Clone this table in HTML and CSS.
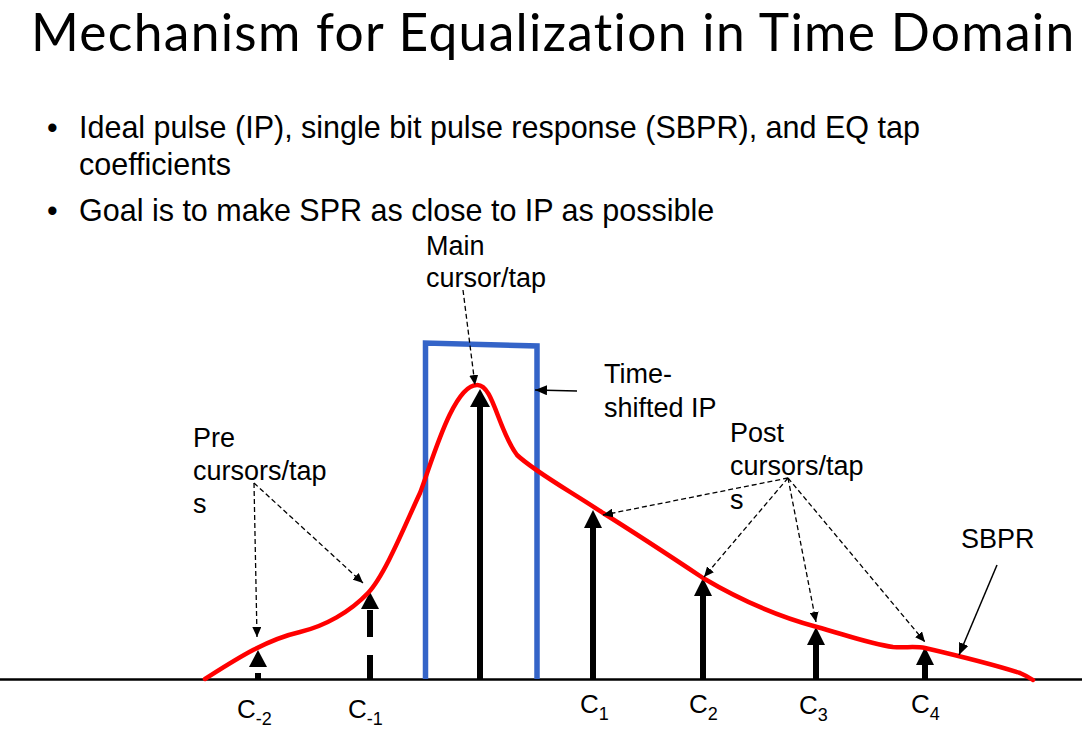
FILE: index.html
```html
<!DOCTYPE html>
<html lang="en">
<head>
<meta charset="utf-8">
<title>Mechanism for Equalization in Time Domain</title>
<link rel="stylesheet" href="styles.css">
</head>
<body>
<div class="slide">
  <header class="head">
    <h1 class="title">Mechanism for Equalization in Time Domain</h1>
    <ul class="points">
      <li class="point"><span class="dot">•</span><span class="txt">Ideal pulse (IP), single bit pulse response (SBPR), and EQ tap coefficients</span></li>
      <li class="point"><span class="dot">•</span><span class="txt">Goal is to make SPR as close to IP as possible</span></li>
    </ul>
  </header>
  <svg class="diagram" viewBox="0 228 1092 502" width="1092" height="502" xmlns="http://www.w3.org/2000/svg">
    <defs>
      <marker id="hd" markerUnits="userSpaceOnUse" markerWidth="10" markerHeight="9" refX="10" refY="4.5" orient="auto">
        <path class="head-fill" d="M0,0 L10,4.5 L0,9 Z"/>
      </marker>
      <marker id="hs" markerUnits="userSpaceOnUse" markerWidth="12" markerHeight="10" refX="12" refY="5" orient="auto">
        <path class="head-fill" d="M0,0 L12,5 L0,10 Z"/>
      </marker>
    </defs>

    <!-- axis -->
    <line class="axis" x1="0" y1="679.5" x2="1082" y2="679.5"/>

    <!-- ideal pulse -->
    <path class="ip" d="M425.5,679 L425.5,343 L537,346 L537,679"/>

    <!-- tap arrows -->
    <g class="taps">
      <rect x="255" y="673" width="6" height="7"/>
      <path d="M249,667 L258,650 L267,667 Z"/>

      <rect x="367" y="655" width="6" height="25"/>
      <rect x="367" y="610" width="6" height="27"/>
      <path d="M361,609 L370,592 L379,609 Z"/>

      <rect x="477" y="405" width="6" height="275"/>
      <path d="M470,407 L480,389 L490,407 Z"/>

      <rect x="590" y="526" width="6" height="154"/>
      <path d="M584,528 L593,510 L602,528 Z"/>

      <rect x="700" y="594" width="6" height="86"/>
      <path d="M694,596 L703,578 L712,596 Z"/>

      <rect x="813" y="643" width="6" height="37"/>
      <path d="M807,645 L816,627 L825,645 Z"/>

      <rect x="922" y="663" width="6" height="17"/>
      <path d="M916,665 L925,647 L934,665 Z"/>
    </g>

    <!-- single bit pulse response -->
    <path class="sbpr" d="M205,679 C235,660 265,640 300,632 C325,626 350,612 368,593 C385,575 405,525 420,493 C432,462 453,385 477,385 C493,384 498,430 517,455 C535,472 570,491 603,513 C635,533 670,556 703,578 C740,600 780,617 817,627 C843,634 870,644 893,647 C905,648 915,646 925,648 C955,655 995,665 1020,673 C1027,676 1030,678 1033,680"/>

    <!-- dashed pointers -->
    <g class="pointer">
      <line x1="254" y1="483" x2="257" y2="637"/>
      <line x1="254" y1="483" x2="363" y2="583"/>
      <line x1="463" y1="290" x2="475" y2="385"/>
      <line x1="788" y1="478" x2="603" y2="515"/>
      <line x1="788" y1="478" x2="704" y2="577"/>
      <line x1="788" y1="478" x2="816" y2="622"/>
      <line x1="788" y1="478" x2="925" y2="642"/>
    </g>

    <!-- solid pointers -->
    <g class="pointer-solid">
      <line x1="577" y1="391" x2="535" y2="390"/>
      <line x1="997" y1="565" x2="959" y2="655"/>
    </g>

    <!-- labels -->
    <g class="lbl">
      <text x="426" y="255">Main</text>
      <text x="426" y="287">cursor/tap</text>
      <text x="604" y="383">Time-</text>
      <text x="604" y="417">shifted IP</text>
      <text x="193" y="447">Pre</text>
      <text x="193" y="480">cursors/tap</text>
      <text x="193" y="513">s</text>
      <text x="730" y="442">Post</text>
      <text x="730" y="475">cursors/tap</text>
      <text x="730" y="509">s</text>
      <text x="961" y="548">SBPR</text>
    </g>
    <g class="clbl">
      <text x="237" y="718">C<tspan class="sub" dy="7">-2</tspan></text>
      <text x="348" y="718">C<tspan class="sub" dy="7">-1</tspan></text>
      <text x="580" y="713">C<tspan class="sub" dy="7">1</tspan></text>
      <text x="689" y="713">C<tspan class="sub" dy="7">2</tspan></text>
      <text x="799" y="714">C<tspan class="sub" dy="7">3</tspan></text>
      <text x="911" y="713">C<tspan class="sub" dy="7">4</tspan></text>
    </g>
  </svg>
</div>
</body>
</html>
```

FILE: styles.css
```css
html, body {
  margin: 0;
  padding: 0;
  background: #ffffff;
}

.slide {
  width: 1092px;
  height: 730px;
  overflow: hidden;
  background: #ffffff;
  color: #000000;
}

.head {
  display: flow-root;
  height: 228px;
}

.title {
  margin: 0;
  padding-left: 31px;
  font-family: "Lato", "Open Sans", sans-serif;
  font-weight: 400;
  font-size: 51.5px;
  line-height: 62px;
  letter-spacing: 1.3px;
}

.points {
  list-style: none;
  margin: 47px 0 0 0;
  padding: 0;
  font-family: "Liberation Sans", Arial, sans-serif;
  font-size: 30.5px;
  line-height: 37px;
}

.point {
  display: flex;
  margin-left: 47px;
}

.point + .point {
  margin-top: 9px;
}

.dot {
  flex: none;
  width: 32px;
}

.txt {
  max-width: 880px;
}

.diagram {
  display: block;
}

.axis {
  stroke: #000000;
  stroke-width: 2.5;
}

.ip {
  fill: none;
  stroke: #3464c8;
  stroke-width: 5.5;
  stroke-linejoin: miter;
}

.taps {
  fill: #000000;
}

.sbpr {
  fill: none;
  stroke: #ff0000;
  stroke-width: 4.5;
  stroke-linecap: round;
  stroke-linejoin: round;
}

.pointer line {
  stroke: #000000;
  stroke-width: 1.3;
  stroke-dasharray: 5 3;
  marker-end: url(#hd);
}

.pointer-solid line {
  stroke: #000000;
  stroke-width: 1.5;
  marker-end: url(#hs);
}

.head-fill {
  fill: #000000;
}

.lbl text {
  font-family: "Liberation Sans", Arial, sans-serif;
  font-size: 27px;
  fill: #000000;
}

.clbl text {
  font-family: "Liberation Sans", Arial, sans-serif;
  font-size: 26px;
  fill: #000000;
}

.clbl .sub {
  font-size: 18px;
}
```
